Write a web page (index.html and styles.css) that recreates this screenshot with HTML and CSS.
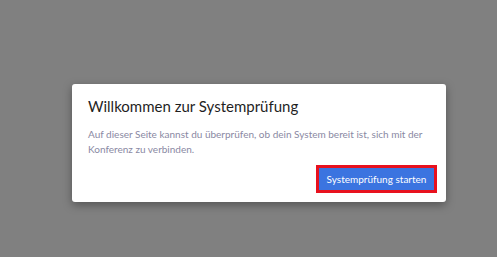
FILE: index.html
```
<!DOCTYPE html>
<html lang="de">
<head>
  <meta charset="UTF-8" />
  <meta name="viewport" content="width=device-width, initial-scale=1.0" />
  <title>Systemprüfung</title>
  <link rel="stylesheet" href="styles.css">
</head>
<body>
  <div class="overlay">
    <div class="dialog">
      <h1 class="dialog-title">Willkommen zur Systemprüfung</h1>
      <p class="dialog-text">Auf dieser Seite kannst du überprüfen, ob dein System bereit ist, sich mit der Konferenz zu verbinden.</p>
      <div class="dialog-actions">
        <button class="start-button">Systemprüfung starten</button>
      </div>
    </div>
  </div>
</body>
</html>
```

FILE: styles.css
```
* {
  margin: 0;
  padding: 0;
  box-sizing: border-box;
}

body {
  font-family: 'Lato', 'Open Sans', sans-serif;
  background: #808080;
  width: 497px;
  height: 257px;
  overflow: hidden;
}

.overlay {
  padding: 84px 0 0 72px;
}

.dialog {
  width: 374px;
  height: 118px;
  background: #fff;
  border-radius: 3px;
  box-shadow: 0 3px 10px rgba(0, 0, 0, 0.35);
  padding: 12px 9px 0 16px;
  display: flex;
  flex-direction: column;
}

.dialog-title {
  font-size: 15px;
  font-weight: 400;
  color: #1f1f1f;
  line-height: 20px;
  margin-bottom: 11px;
}

.dialog-text {
  font-size: 10px;
  line-height: 15px;
  color: #8a89a3;
  padding-right: 7px;
}

.dialog-actions {
  display: flex;
  justify-content: flex-end;
  margin-top: 8px;
}

.start-button {
  font-family: inherit;
  font-size: 10px;
  color: #fff;
  background: #3b74e0;
  border: 3px solid #e8111e;
  height: 28px;
  width: 121px;
  white-space: nowrap;
  cursor: pointer;
}
```
